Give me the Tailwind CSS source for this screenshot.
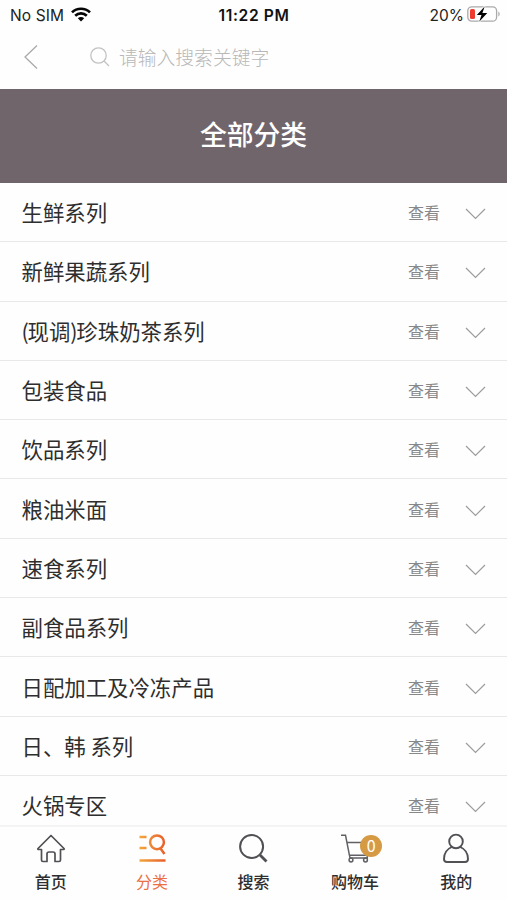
<!DOCTYPE html>
<html lang="zh-CN">
<head>
<meta charset="utf-8">
<title>全部分类</title>
<script src="https://cdn.jsdelivr.net/npm/@tailwindcss/browser@4"></script>
</head>
<body class="w-[507px] h-[900px] overflow-hidden flex flex-col bg-[#fefefe] font-['Noto_Sans_CJK_SC',sans-serif] text-[#2e2e2e]">
<div class="h-[30px] shrink-0 grid grid-cols-3 items-center pl-[10px] pr-[7px] font-['Inter',sans-serif] text-[15.5px] text-[#222]">
  <div class="flex items-center gap-[7px]">
    <span class="whitespace-nowrap pt-px tracking-[0.1px]">No SIM</span>
    <svg class="w-5 h-[15px] -mt-px" viewBox="0 0 20 15" fill="none" stroke="#050505" stroke-width="2.7"><path d="M1 5.4C6 .5 14 .5 19 5.4M4.200 8.700c3.300-3.100 8.300-3.100 11.600 0"/><path d="M10 14.500 6.800 11.300c1.800-1.600 4.600-1.600 6.400 0z" fill="#050505" stroke="none"/></svg>
  </div>
  <div class="text-center font-semibold text-[15.600px] tracking-[0.6px] text-[#111] whitespace-nowrap pt-px pr-[2px]">11:22 PM</div>
  <div class="flex items-center justify-end gap-[3px]">
    <span class="pt-px">20%</span>
    <svg class="w-[33px] h-[18px] -mt-[2px]" viewBox="0 0 33 18" fill="none"><rect x=".8" y="1.800" width="28.800" height="14.400" rx="4" stroke="#aaa" stroke-width="1.300"/><path d="M31.300 6.500c1.800.8 1.800 4.200 0 5z" fill="#aaa"/><rect x="3" y="4" width="5" height="10" rx="1.500" fill="#ef3b2d"/><path d="M17.700 1.500 9.800 10h4.700l-2.300 6.800L20.300 8h-4.900z" fill="#000" stroke="#fefefe" stroke-width="1.600" paint-order="stroke"/></svg>
  </div>
</div>
<div class="h-[58.500px] shrink-0 flex items-center pl-6 pb-[4px]">
  <svg class="w-[14px] h-[26px]" viewBox="0 0 14 26" fill="none" stroke="#aaa" stroke-width="1.300"><path d="M13 1.500 1 13l12 11.500"/></svg>
  <svg class="w-5 h-5 ml-[52px]" viewBox="0 0 20 20" fill="none" stroke="#c2c2c2" stroke-width="1.300"><circle cx="8.500" cy="8.500" r="7.700"/><path d="m14 14 5 5"/></svg>
  <span class="ml-[9px] text-[18.800px] leading-6 font-light text-[#b8b8b8]">请输入搜索关键字</span>
</div>
<h1 class="h-[94.500px] shrink-0 bg-[#71656c] flex items-center justify-center text-[26.800px] font-medium text-white pb-[3px]">全部分类</h1>
<main id="list" class="h-[642px] shrink-0 overflow-hidden"></main>
<nav class="h-[75px] shrink-0 grid grid-cols-5 border-t-2 border-[#f4f4f4] text-[16px] leading-5 font-medium">
  <div class="flex flex-col items-center pt-[6px] gap-[8px]">
    <svg class="w-[30px] h-[30px]" viewBox="0 0 30 30" fill="none" stroke="#505055" stroke-width="1.700" stroke-linejoin="round"><path d="M15 2.500 2 15.500q-.5 1 .7 1H5.500V27q0 1.500 1.500 1.500h4V21q0-2 2-2h4q2 0 2 2v7.500h4q1.500 0 1.500-1.500V16.500h2.800q1.200 0 .7-1z"/></svg>
    <span>首页</span>
  </div>
  <div class="flex flex-col items-center pt-[6px] gap-[8px] text-[#ec7046] font-normal">
    <svg class="w-[30px] h-[30px]" viewBox="0 0 30 30" fill="none" stroke-width="2.500"><defs><linearGradient id="glow" gradientUnits="userSpaceOnUse" x1="2" y1="0" x2="28" y2="0"><stop stop-color="#f2a83d"/><stop offset="1" stop-color="#e85f2b"/></linearGradient></defs><g stroke="url(#glow)"><path d="M2.500 4h7M2.500 15h7M2.500 27.500h26.010"/><path d="m23.500 15.500 4 5.500"/><circle cx="20" cy="9.300" r="6.900"/></g></svg>
    <span>分类</span>
  </div>
  <div class="flex flex-col items-center pt-[6px] gap-[8px]">
    <svg class="w-[30px] h-[30px]" viewBox="0 0 30 30" fill="none" stroke="#505055"><circle cx="13.600" cy="13.500" r="11.500" stroke-width="2"/><path d="m22 22 6.500 6.500" stroke-width="2.800"/></svg>
    <span>搜索</span>
  </div>
  <div class="relative flex flex-col items-center pt-[6px] gap-[8px]">
    <svg class="w-[30px] h-[30px]" viewBox="0 0 30 30" fill="none" stroke="#606065" stroke-width="1.500"><path d="M1 2.200h4.500l4.500 23M7 9.500h21M9.500 22.200H27l2-10M9.800 25h17.500v-2.500"/><circle cx="11" cy="27" r="1.900"/><circle cx="25.500" cy="27" r="1.900"/></svg>
    <span>购物车</span>
    <span class="absolute left-[56px] top-[8px] w-[22px] h-[22px] rounded-full bg-[#d59a43] text-white text-[16px] leading-[21px] text-center font-normal">0</span>
  </div>
  <div class="flex flex-col items-center pt-[6px] gap-[8px]">
    <svg class="w-[30px] h-[30px]" viewBox="0 0 30 30" fill="none" stroke="#505055" stroke-width="1.900"><circle cx="15" cy="8.400" r="6.800"/><path d="M10.800 14C5 16.500 3 21 3 26q0 3 3 3h18q3 0 3-3c0-5-2-9.500-7.800-12"/></svg>
    <span>我的</span>
  </div>
</nav>
<script>
const names = ["生鲜系列","新鲜果蔬系列","(现调)珍珠奶茶系列","包装食品","饮品系列","粮油米面","速食系列","副食品系列","日配加工及冷冻产品","日、韩 系列","火锅专区"];
const narrow = s => s.replace(/[()]/g, c => `<span class="tracking-[-1.200px]">${c}</span>`);
document.getElementById("list").innerHTML = names.map(name => `
<div class="h-[59.300px] flex items-center border-b border-[#e8e8e8] pl-[21.500px] pr-[21px]">
  <span class="flex-1 text-[21.400px] leading-8">${narrow(name)}</span>
  <span class="text-[16px] leading-6 text-[#888]">查看</span>
  <svg class="ml-[25px] mt-[4px] w-[21px] h-[12px]" viewBox="0 0 21 12" fill="none" stroke="#9c9c9c" stroke-width="1.200"><path d="m1 1 9.500 9.500L20 1"/></svg>
</div>`).join("");
</script>
</body>
</html>
